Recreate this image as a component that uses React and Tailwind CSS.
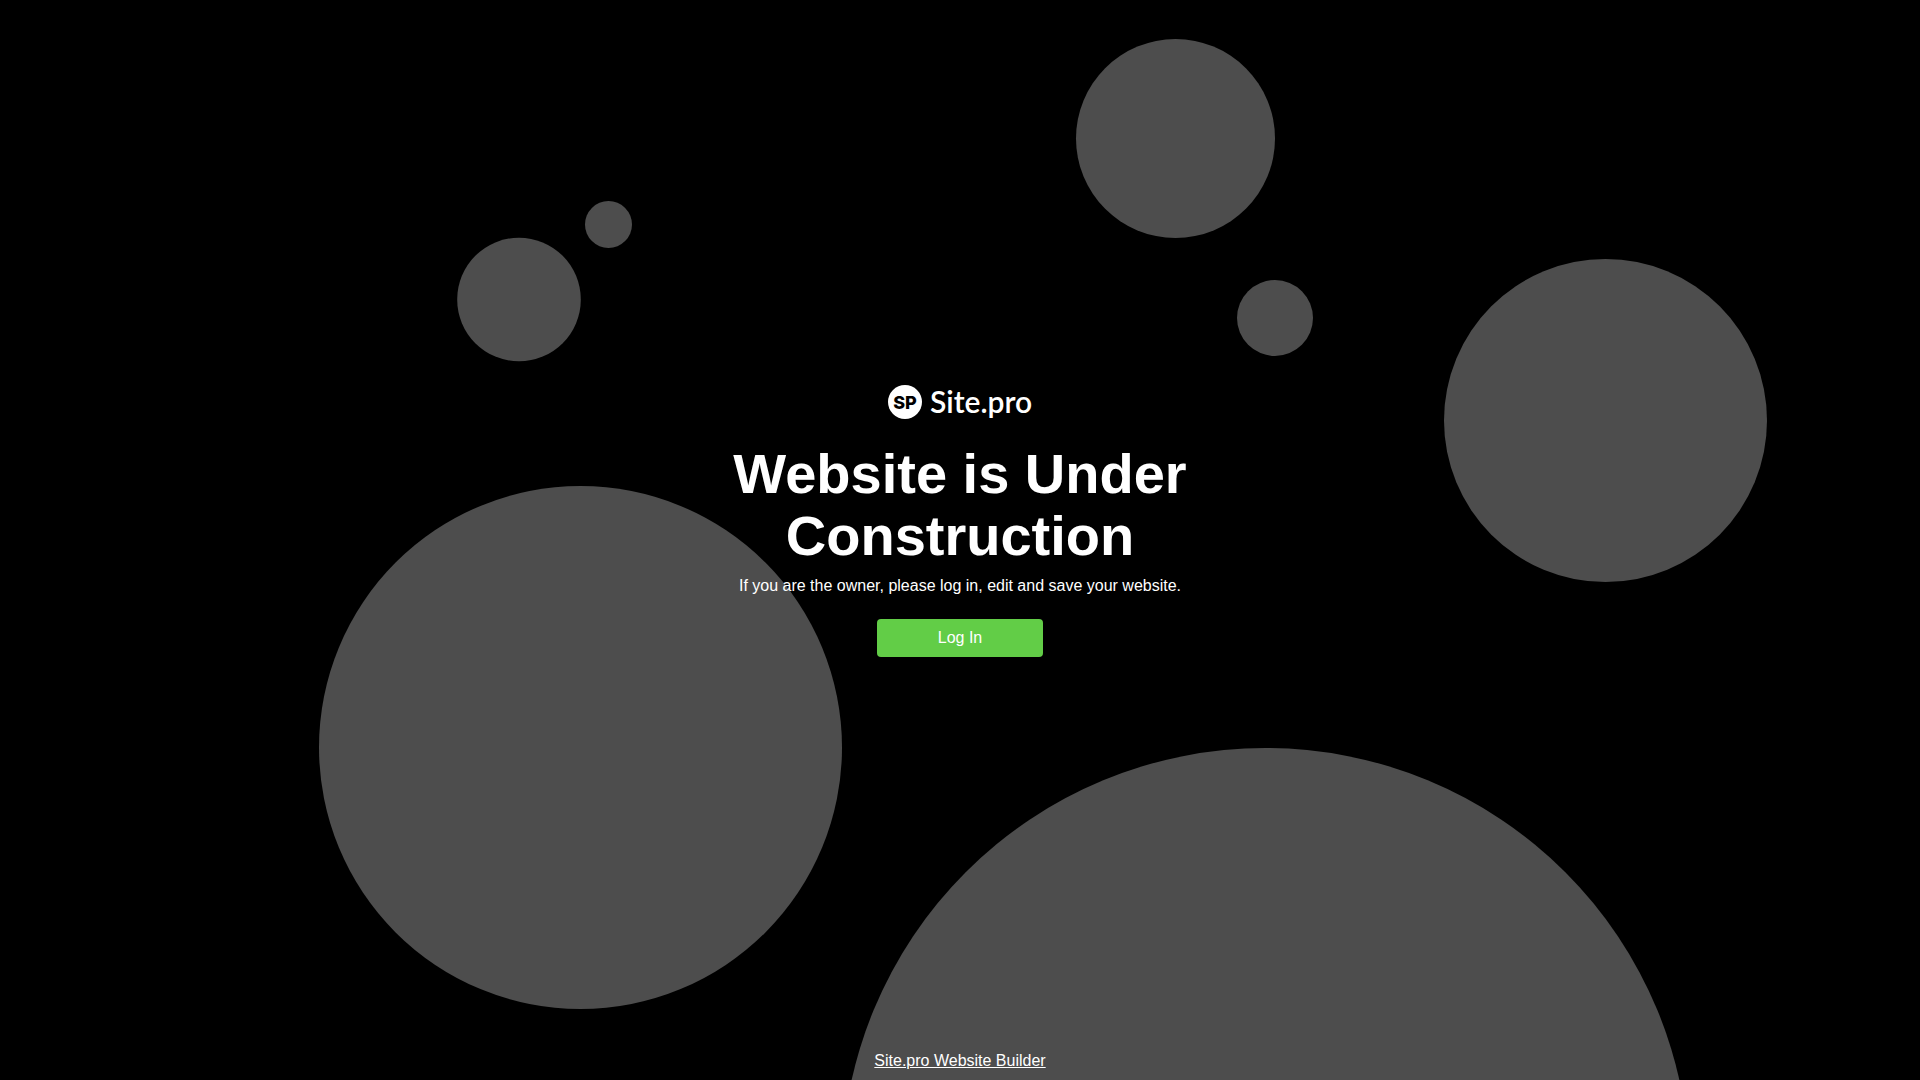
import React from 'react'

const bubbles = [
  { cx: 519, cy: 299.5, r: 61.8 },
  { cx: 608.5, cy: 224.5, r: 23.5 },
  { cx: 1175.5, cy: 138.5, r: 99.5 },
  { cx: 1275, cy: 318, r: 38 },
  { cx: 1605.5, cy: 420.5, r: 161.5 },
  { cx: 580.5, cy: 747.5, r: 261.5 },
  { cx: 1265.5, cy: 1172, r: 424 },
]

function Background() {
  return (
    <svg
      className="absolute inset-0 w-full h-full"
      viewBox="0 0 1920 1080"
      preserveAspectRatio="xMidYMid slice"
      aria-hidden="true"
    >
      {bubbles.map((b, i) => (
        <circle key={i} cx={b.cx} cy={b.cy} r={b.r} fill="#4d4d4d" />
      ))}
    </svg>
  )
}

function Logo() {
  return (
    <svg width="144" height="34" viewBox="0 0 144 34" role="img" aria-label="Site.pro" className="overflow-visible">
      <circle cx="17" cy="17" r="17" fill="#fff" />
      <text x="17" y="24" textAnchor="middle" fontSize="18" fontWeight="800" fill="#000" className="font-['Inter',sans-serif]">SP</text>
      <text x="42" y="28" fontSize="30" fontWeight="600" fill="#fff" className="font-['Lato',sans-serif]">Site.pro</text>
    </svg>
  )
}

export default function App() {
  return (
    <div className="relative flex flex-col min-h-screen overflow-hidden bg-black text-white text-base font-['Liberation_Sans',Arial,sans-serif]">
      <Background />

      <main className="relative flex-1 flex flex-col items-center justify-center px-4 text-center">
        <Logo />
        <h1 className="mt-6 max-w-[480px] text-[56px] leading-[62px] font-bold">
          Website is Under Construction
        </h1>
        <p className="mt-2 leading-[22px]">If you are the owner, please log in, edit and save your website.</p>
        <button type="button" className="mt-[22px] w-[166px] h-[38px] rounded bg-[#62cd47] text-white cursor-pointer">
          Log In
        </button>
      </main>

      <footer className="relative py-[7px] text-center">
        <a href="#" className="underline">Site.pro Website Builder</a>
      </footer>
    </div>
  )
}
